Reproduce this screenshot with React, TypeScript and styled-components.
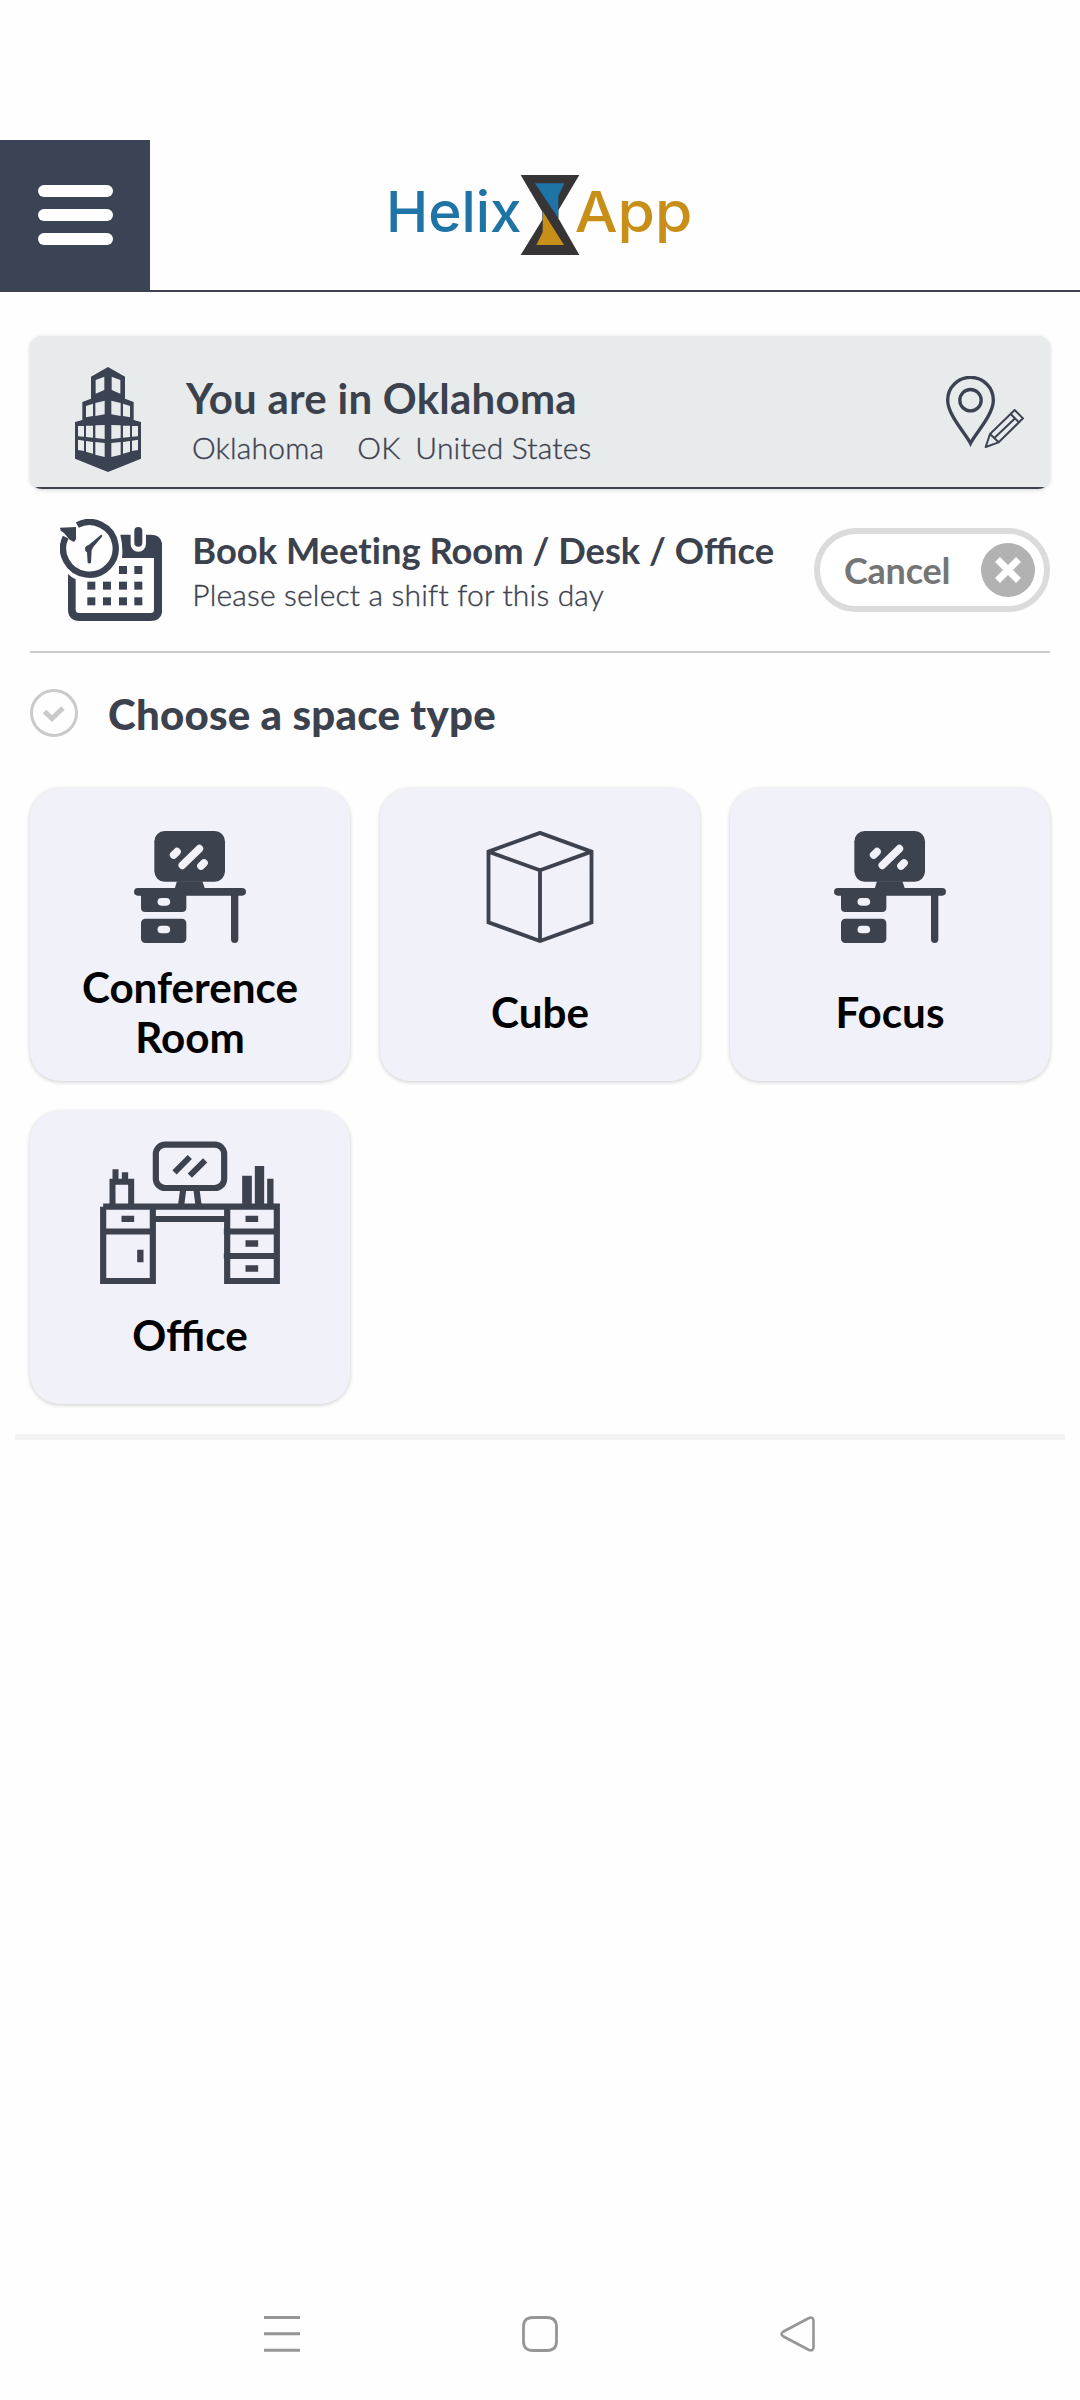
import React from "react";
import styled, { createGlobalStyle } from "styled-components";

const ink = "#3c414e";
const slate = "#3b4353";
const graphite = "#3c424e";

const GlobalStyle = createGlobalStyle`
  * { box-sizing: border-box; }
  body { margin: 0; background: #fefefe; font-family: Lato, "Open Sans", sans-serif; }
  svg { display: block; flex: none; }
`;

const Screen = styled.div`
  width: 1080px;
  height: 2400px;
  padding-top: 140px;
  display: flex;
  flex-direction: column;
  background: #fefefe;
  color: ${ink};
`;

const Header = styled.header`
  height: 152px;
  flex: none;
  display: grid;
  grid-template-columns: 150px 1fr 150px;
  border-bottom: 2px solid #3f4150;
`;

const MenuButton = styled.button`
  border: 0;
  padding: 0;
  background: #3b4454;
  display: flex;
  flex-direction: column;
  align-items: center;
  justify-content: center;
  gap: 12px;
`;

const MenuBar = styled.span`
  width: 75px;
  height: 12px;
  border-radius: 6px;
  background: #fff;
`;

const LogoSlot = styled.div`
  display: flex;
  justify-content: center;
  align-items: center;
`;

const Content = styled.main`
  flex: 1;
  padding: 44px 30px 0;
  display: flex;
  flex-direction: column;
`;

const LocationCard = styled.section`
  height: 153px;
  flex: none;
  border-radius: 12px;
  overflow: hidden;
  background: #e8ebec;
  box-shadow: 0 1px 4px rgba(0, 0, 0, 0.16);
`;

const LocationInner = styled.div`
  height: 153px;
  display: flex;
  align-items: flex-start;
  padding: 31px 26px 0 45px;
  border-bottom: 2px solid ${ink};
`;

const LocationText = styled.div`
  flex: 1;
  padding: 6px 0 0 45px;
`;

const LocationTitle = styled.h1`
  margin: 0;
  font-size: 42px;
  line-height: 50px;
  font-weight: 700;
  letter-spacing: 0.25px;
`;

const LocationDetail = styled.p`
  margin: 0 0 0 6px;
  font-size: 30px;
  line-height: 48px;
  font-weight: 300;
  letter-spacing: 0.18px;
  -webkit-text-stroke: 0.35px ${ink};
  display: flex;
`;

const DetailPart = styled.span<{ $gap: number }>`
  margin-right: ${(p) => p.$gap}px;
`;

const PinSlot = styled.div`
  padding-top: 9px;
`;

const BookingRow = styled.section`
  height: 164px;
  flex: none;
  display: flex;
  align-items: flex-start;
  padding: 30px 0 0 30px;
  border-bottom: 2px solid #cacaca;
`;

const BookingText = styled.div`
  flex: 1;
  padding: 7px 0 0 30px;
  white-space: nowrap;
`;

const BookingTitle = styled.h2`
  margin: 0;
  font-size: 36.3px;
  line-height: 48px;
  font-weight: 700;
`;

const Unjoined = styled.span`
  font-variant-ligatures: none;
`;

const BookingHint = styled.p`
  margin: 0;
  font-size: 30px;
  line-height: 41px;
  font-weight: 300;
  letter-spacing: 0.18px;
  -webkit-text-stroke: 0.35px ${ink};
`;

const CancelButton = styled.button`
  width: 236px;
  height: 84px;
  margin-top: 9px;
  padding: 0 9px 0 24px;
  border: 6px solid #dbdbdb;
  border-radius: 42px;
  background: #fff;
  color: #757575;
  display: flex;
  align-items: center;
  justify-content: space-between;
  font: 700 36px/1.2 Lato, sans-serif;
  letter-spacing: -0.25px;
`;

const CancelLabel = styled.span`
  padding-top: 2px;
`;

const SectionHeading = styled.div`
  height: 134px;
  flex: none;
  display: flex;
  align-items: flex-start;
  padding-top: 36px;
`;

const SectionTitle = styled.h2`
  margin: 0 0 0 30px;
  font-size: 42px;
  line-height: 50px;
  font-weight: 900;
  letter-spacing: 0.22px;
`;

const SpaceGrid = styled.div`
  display: grid;
  grid-template-columns: repeat(3, 320px);
  grid-auto-rows: 293px;
  gap: 30px;
  padding-top: 1px;
`;

const SpaceCard = styled.button`
  border: 0;
  padding: 27px 30px 0;
  border-radius: 30px;
  background: #f1f1fa;
  box-shadow: 0 1px 4px rgba(0, 0, 0, 0.2);
  color: #000;
  display: flex;
  flex-direction: column;
  align-items: center;
  justify-content: flex-start;
`;

const IconSlot = styled.div`
  height: 144px;
  display: flex;
  align-items: center;
`;

const SpaceLabel = styled.span`
  height: 106px;
  display: flex;
  align-items: center;
  text-align: center;
  font: 700 42.2px/50px Lato, sans-serif;
`;

const EndBar = styled.div`
  height: 6px;
  margin: 30px -15px 0;
  background: #f4f4f4;
`;

const NavBar = styled.nav`
  height: 132px;
  flex: none;
  padding: 0 264px;
  display: flex;
  align-items: center;
  justify-content: space-between;
`;

const Logo = () => (
  <svg width="320" height="80" viewBox="30 75 960 240" fontFamily="Inter, sans-serif" fontWeight="500">
    <text x="48" y="246" fontSize="169" fill="#1f74a6" textLength="407" lengthAdjust="spacingAndGlyphs">Helix</text>
    <path d="M452 75H628L565 181V205L628 315H452L517 209V185Z" fill="#373435" />
    <path d="M495 100H583L565 138V205Z" fill="#1f74a6" />
    <path d="M519 185L582 285H499L518 247Z" fill="#c88f18" />
    <text x="614" y="246" fontSize="169" fill="#c88f18" textLength="353" lengthAdjust="spacingAndGlyphs">App</text>
  </svg>
);

const leftWindows = [
  [227, 180, 253, 170, 253, 210, 227, 221],
  [198, 258, 219, 251, 219, 288, 198, 292],
  [226, 249, 254, 242, 254, 283, 226, 288],
  [174, 318, 192, 318, 192, 350, 174, 349],
  [198, 317, 219, 317, 219, 353, 198, 351],
  [226, 316, 254, 315, 254, 357, 226, 354],
  [174, 359, 192, 362, 192, 393, 174, 390],
  [198, 363, 219, 366, 219, 401, 198, 395],
  [226, 366, 254, 369, 254, 411, 226, 404],
];

const BuildingIcon = () => (
  <svg width="66" height="105" viewBox="165 141 198 315">
    <path
      d="M264 141L213 170V236L187 246V300L165 306V416L264 456L363 416V306L341 300V246L315 236V170Z"
      fill={slate}
    />
    <g fill="#e8ebec">
      {leftWindows.map((w, i) => (
        <React.Fragment key={i}>
          <polygon points={w.join(" ")} />
          <polygon points={w.map((v, j) => (j % 2 ? v : 528 - v)).join(" ")} />
        </React.Fragment>
      ))}
    </g>
  </svg>
);

const PinEditIcon = () => (
  <svg width="78" height="72" viewBox="138 138 234 216" fill="none" stroke={slate}>
    <path d="M211.500 340C198 312 143 255 143 210.500A68.500 68.500 0 0 1 280 210.500C280 255 225 312 211.500 340Z" strokeWidth="10" />
    <circle cx="211.500" cy="210.500" r="32" strokeWidth="10" />
    <g strokeWidth="6" strokeLinejoin="round">
      <path d="M257 351L270 312L344 240L369 265L296 337Z" />
      <path d="M270 312L296 337M332 252L357 277M283 324L347 263" />
    </g>
  </svg>
);

const CalendarClockIcon = () => (
  <svg width="102.300" height="102" viewBox="120 57 307 306">
    <path
      d="M301 104H332V132A23 23 0 0 0 378 132V104H392Q427 104 427 139V328Q427 363 392 363H179Q144 363 144 328V222Q154 232 167 238V329Q167 339 178 339H392Q402 339 402 329V174H306Q310 140 301 104Z"
      fill={slate}
    />
    <rect x="343" y="81" width="24" height="59" rx="12" fill={slate} />
    <g fill={slate}>
      {[[297, 198], [343, 198], [202, 245], [249, 245], [297, 245], [343, 245], [202, 292], [249, 292], [297, 292], [343, 292]].map(
        ([x, y]) => (
          <rect key={`${x}-${y}`} x={x} y={y} width="24" height="24" />
        ),
      )}
    </g>
    <path d="M172 75A79 79 0 1 1 137 111" fill="none" stroke={slate} strokeWidth="19" />
    <path d="M120 83L168 81V118L162 126L149 119L132 99L122 92Z" fill={slate} />
    <path d="M243 104Q248 104 247 109L220 141L215 151L213 188Q208 193 203 188L201 157Q194 153 195 143Q197 137 207 134Z" fill={slate} />
  </svg>
);

const CheckCircleIcon = () => (
  <svg width="48" height="48" viewBox="0 0 48 48" fill="none" stroke="#cacaca">
    <circle cx="24" cy="24" r="22.500" strokeWidth="3" />
    <path d="M14.500 22.500L22 29.500L33 19" strokeWidth="5" />
  </svg>
);

const CloseCircleIcon = () => (
  <svg width="54" height="54" viewBox="0 0 54 54">
    <circle cx="27" cy="27" r="27" fill="#b2b2b2" />
    <path d="M16.500 16.500L37.500 37.500M37.500 16.500L16.500 37.500" stroke="#fff" strokeWidth="7" />
  </svg>
);

const DeskIcon = () => (
  <svg width="112" height="112" viewBox="342.500 183 335 336" fill={graphite}>
    <rect x="403" y="183" width="212" height="152" rx="31" />
    <path d="M471 334H547L555 356H464Z" />
    <rect x="342" y="354" width="336" height="23" rx="11.500" />
    <path d="M363 370H499V413Q499 426 486 426H376Q363 426 363 413Z" />
    <rect x="363" y="446" width="136" height="73" rx="13" />
    <path d="M644 370V508" stroke={graphite} strokeWidth="22" strokeLinecap="round" />
    <g stroke="#f1f1fa" strokeWidth="23" strokeLinecap="round">
      <path d="M461 255L471 245M487 286L538 236M543 288L552 279M424 395.500H439M424 478.500H439" />
    </g>
  </svg>
);

const CubeIcon = () => (
  <svg width="108" height="112" viewBox="348 183 324 336" fill="none" stroke={graphite} strokeWidth="11.500">
    <path d="M355.500 245L510 188.500L664.500 245V457L510 513L355.500 457ZM355.500 245L510 301L664.500 245M510 301V513" />
  </svg>
);

const OfficeIcon = () => (
  <svg width="180" height="148" viewBox="240.500 109 540 444" fill={graphite}>
    <rect x="408" y="135" width="205" height="130" rx="28" fill="none" stroke={graphite} strokeWidth="18.500" />
    <path d="M464 218L510 172M510 228L556 182" stroke={graphite} strokeWidth="18" />
    <path d="M490 270L484 316M530 270L536 316" stroke={graphite} strokeWidth="18.500" />
    <path d="M278 209H296V237H306V218H325V237H343V315H325V255H287V315H269V237H278Z" />
    <path d="M667 228H696V315H667ZM705 199H733V315H705ZM742 237H761V315H742Z" />
    <path d="M250 321H771V544H622V321M399 321V544H250V321M250 395.500H408M399 358H622M612 395.500H780M612 469H780" fill="none" stroke={graphite} strokeWidth="18.500" />
    <path d="M305 348H343V367H305ZM352 450H371V488H352ZM677 348H715V367H677ZM677 422H715V441H677ZM677 497H715V516H677Z" />
  </svg>
);

const NavRecents = () => (
  <svg width="36" height="36" viewBox="0 0 36 36" stroke="#969696" strokeWidth="3">
    <path d="M0 1.500H36M0 17.800H36M0 34.300H36" />
  </svg>
);

const NavHome = () => (
  <svg width="36" height="36" viewBox="0 0 36 36" fill="none" stroke="#969696" strokeWidth="2.800">
    <path d="M11 1.500H25Q34.500 1.500 34.500 11V25Q34.500 34.500 25 34.500H11Q1.500 34.500 1.500 25V11Q1.500 1.500 11 1.500Z" />
  </svg>
);

const NavBack = () => (
  <svg width="36" height="36" viewBox="0 0 36 36" fill="none" stroke="#969696" strokeWidth="2.600">
    <path d="M29 2Q33.500 .5 33.500 5V31Q33.500 35.500 29 34L3.500 20.500Q-.5 18 3.500 15.500Z" />
  </svg>
);

const spaces = [
  { label: "Conference Room", icon: <DeskIcon /> },
  { label: "Cube", icon: <CubeIcon /> },
  { label: "Focus", icon: <DeskIcon /> },
  { label: "Office", icon: <OfficeIcon /> },
];

export default function App() {
  return (
    <Screen>
      <GlobalStyle />
      <Header>
        <MenuButton aria-label="Menu">
          <MenuBar />
          <MenuBar />
          <MenuBar />
        </MenuButton>
        <LogoSlot>
          <Logo />
        </LogoSlot>
      </Header>
      <Content>
        <LocationCard>
          <LocationInner>
            <BuildingIcon />
            <LocationText>
              <LocationTitle>You are in Oklahoma</LocationTitle>
              <LocationDetail>
                <DetailPart $gap={33}>Oklahoma</DetailPart>
                <DetailPart $gap={15}>OK</DetailPart>
                <DetailPart $gap={0}>United States</DetailPart>
              </LocationDetail>
            </LocationText>
            <PinSlot>
              <PinEditIcon />
            </PinSlot>
          </LocationInner>
        </LocationCard>
        <BookingRow>
          <CalendarClockIcon />
          <BookingText>
            <BookingTitle>
              Book <Unjoined>Meeting</Unjoined> Room / Desk / Office
            </BookingTitle>
            <BookingHint>Please select a shift for this day</BookingHint>
          </BookingText>
          <CancelButton>
            <CancelLabel>Cancel</CancelLabel>
            <CloseCircleIcon />
          </CancelButton>
        </BookingRow>
        <SectionHeading>
          <CheckCircleIcon />
          <SectionTitle>Choose a space type</SectionTitle>
        </SectionHeading>
        <SpaceGrid>
          {spaces.map((s) => (
            <SpaceCard key={s.label}>
              <IconSlot>{s.icon}</IconSlot>
              <SpaceLabel>{s.label}</SpaceLabel>
            </SpaceCard>
          ))}
        </SpaceGrid>
        <EndBar />
      </Content>
      <NavBar>
        <NavRecents />
        <NavHome />
        <NavBack />
      </NavBar>
    </Screen>
  );
}
